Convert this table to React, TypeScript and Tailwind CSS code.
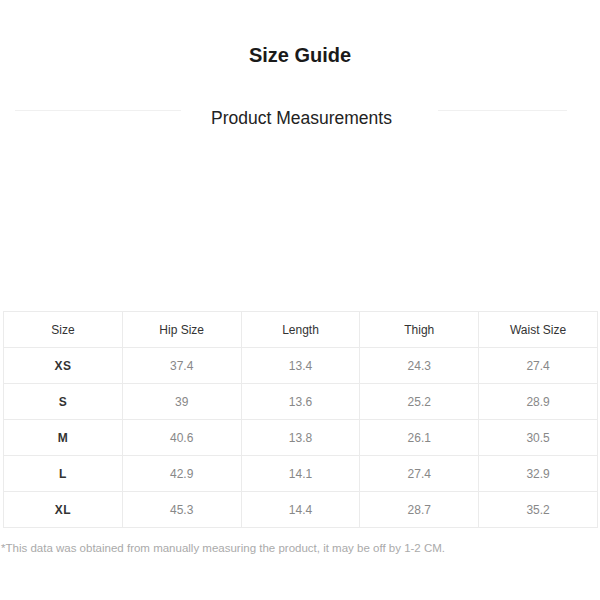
import React from "react";

const rows = [
  ["XS", "37.4", "13.4", "24.3", "27.4"],
  ["S", "39", "13.6", "25.2", "28.9"],
  ["M", "40.6", "13.8", "26.1", "30.5"],
  ["L", "42.9", "14.1", "27.4", "32.9"],
  ["XL", "45.3", "14.4", "28.7", "35.2"],
];

const headers = ["Size", "Hip Size", "Length", "Thigh", "Waist Size"];

export default function App() {
  return (
    <div className="h-[600px] w-[600px] bg-white font-['Liberation_Sans',Arial,sans-serif]">
      <h1 className="pt-[43px] text-center text-[20px] font-bold leading-6 text-[#1a1a1a]">
        Size Guide
      </h1>
      <div className="mt-[43px] flex items-start pl-[15px]">
        <div className="h-px w-[166px] bg-[#f0f0f0]" />
        <h2 className="ml-[30px] mt-[-2px] text-[17.5px] leading-5 text-[#222]">
          Product Measurements
        </h2>
        <div className="ml-[46px] h-px w-[129px] bg-[#f0f0f0]" />
      </div>

      <table className="mt-[183px] ml-[3px] w-[595px] table-fixed border-collapse text-center text-[12px]">
        <thead>
          <tr className="h-[36px]">
            {headers.map((h) => (
              <th
                key={h}
                className="border border-[#ebebeb] font-normal text-[#333]"
              >
                {h}
              </th>
            ))}
          </tr>
        </thead>
        <tbody>
          {rows.map((r) => (
            <tr key={r[0]} className="h-[36px]">
              {r.map((c, i) => (
                <td
                  key={i}
                  className={
                    i === 0
                      ? "border border-[#ebebeb] font-bold tracking-[0.5px] text-[#333]"
                      : "border border-[#ebebeb] text-[#888]"
                  }
                >
                  {c}
                </td>
              ))}
            </tr>
          ))}
        </tbody>
      </table>

      <p className="mt-[12px] ml-[1px] text-[11.5px] text-[#aaa]">
        *This data was obtained from manually measuring the product, it may be
        off by 1-2 CM.
      </p>
    </div>
  );
}
